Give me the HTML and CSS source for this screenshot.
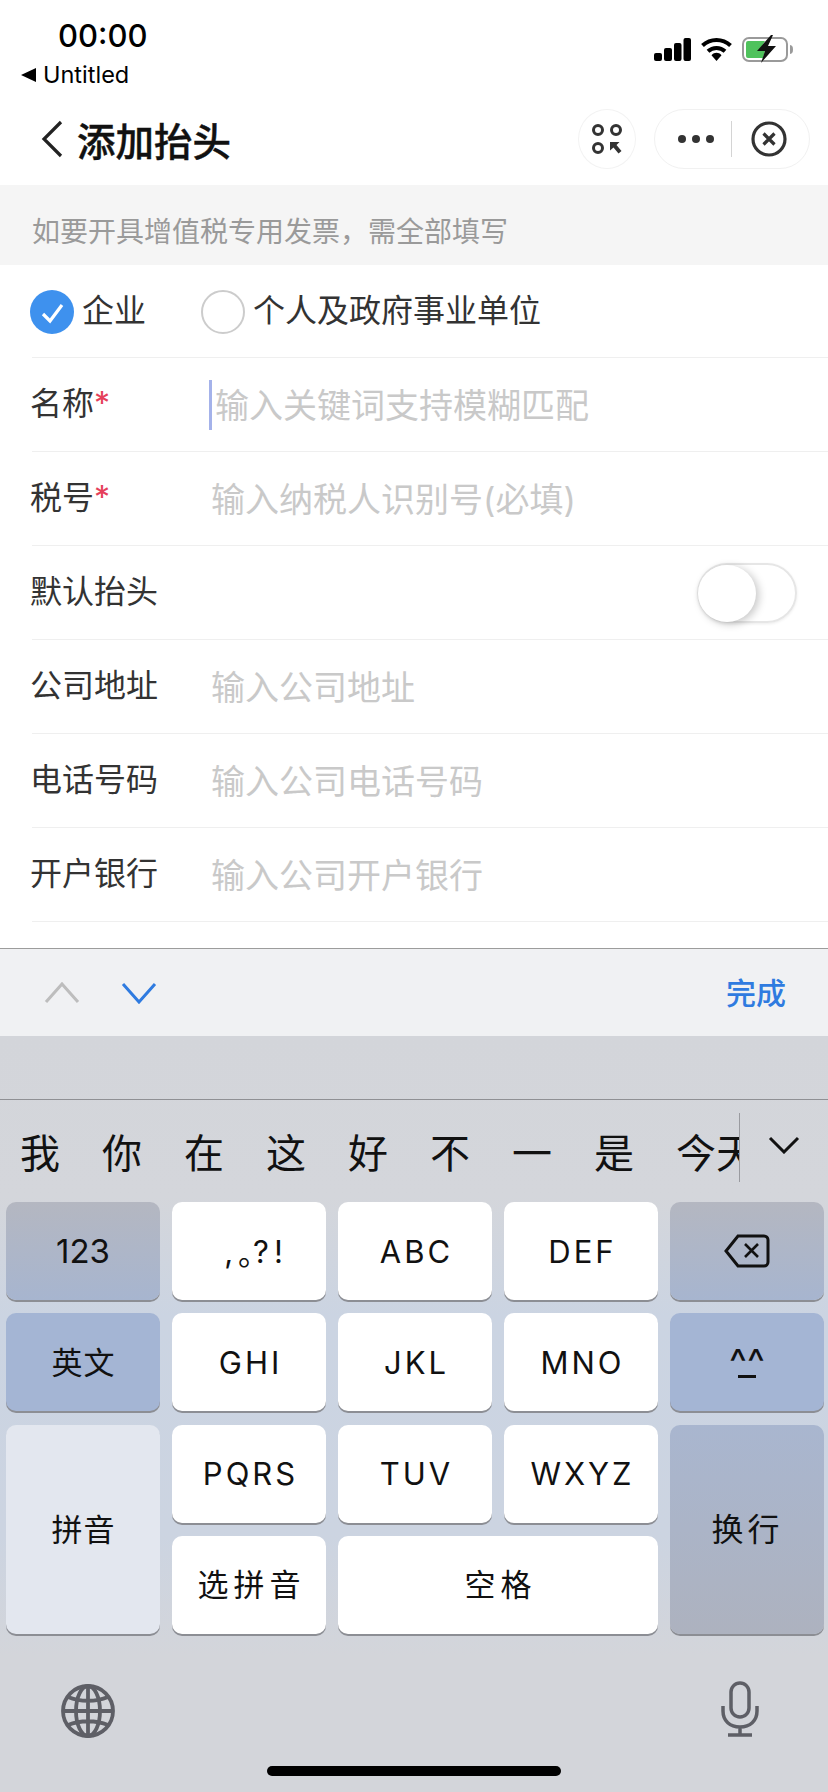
FILE: index.html
```html
<!DOCTYPE html>
<html lang="zh-CN">
<head>
  <meta charset="UTF-8">
  <meta name="viewport" content="width=device-width, initial-scale=1.0">
  <title>添加抬头</title>
  <link rel="stylesheet" href="styles.css">
</head>
<body>
  <div class="page">
    <!-- status bar -->
    <div class="status-bar">
      <div class="status-left">
        <div class="time">00:00</div>
        <div class="from-app"><span class="from-arrow"></span>Untitled</div>
      </div>
      <div class="status-right">
        <svg width="37" height="23" viewBox="0 0 37 23">
          <rect x="0" y="15" width="8" height="8" rx="2"/>
          <rect x="10" y="10" width="8" height="13" rx="2"/>
          <rect x="20" y="5" width="7.5" height="18" rx="2"/>
          <rect x="29.5" y="0" width="7.5" height="23" rx="2"/>
        </svg>
        <svg width="31" height="24" viewBox="0 0 31 24">
          <path d="M1.5 8.5C9.5 1 21.5 1 29.5 8.5" fill="none" stroke="#000" stroke-width="4"/>
          <path d="M7 14.2C11.8 9.8 19.2 9.8 24 14.2" fill="none" stroke="#000" stroke-width="4"/>
          <path d="M10.5 18.2C13.5 15 17.5 15 20.5 18.2L15.5 24Z"/>
        </svg>
        <svg width="54" height="28" viewBox="0 0 54 28">
          <rect x="1" y="3" width="44" height="23" rx="6" fill="none" stroke="#9a9a9a" stroke-width="2"/>
          <path d="M4 8a2 2 0 0 1 2-2h17l-6 10h6l-2 7H6a2 2 0 0 1-2-2Z" fill="#4fc25c"/>
          <path d="M29 0L15 16h8l-4 12 15-17h-8l5-11Z" fill="#111"/>
          <path d="M48 10c2.500.500 3 2 3 4.500s-.500 4-3 4.500Z" fill="#9a9a9a"/>
        </svg>
      </div>
    </div>

    <!-- navigation -->
    <div class="nav-bar">
      <svg class="back-icon" width="24" height="38" viewBox="0 0 24 38">
        <path d="M21 2L4 19l17 17" fill="none" stroke="#222" stroke-width="3.200"/>
      </svg>
      <div class="nav-title">添加抬头</div>
      <div class="round-btn">
        <svg width="30" height="30" viewBox="0 0 30 30">
          <circle cx="6" cy="6" r="4.500" fill="none" stroke="#333" stroke-width="3"/>
          <circle cx="24" cy="6" r="4.500" fill="none" stroke="#333" stroke-width="3"/>
          <circle cx="6" cy="24" r="4.500" fill="none" stroke="#333" stroke-width="3"/>
          <path d="M18 18h9.500l-3 3 5 6-3 2.500-5-6-3.500 3Z" fill="#333"/>
        </svg>
      </div>
      <div class="capsule">
        <div class="capsule-dots"><i></i><i></i><i></i></div>
        <div class="capsule-line"></div>
        <svg width="36" height="36" viewBox="0 0 36 36">
          <circle cx="18" cy="18" r="16" fill="none" stroke="#333" stroke-width="3.200"/>
          <path d="M12.500 12.500l11 11M23.500 12.500l-11 11" fill="none" stroke="#333" stroke-width="3.200"/>
        </svg>
      </div>
    </div>

    <div class="notice">如要开具增值税专用发票，需全部填写</div>

    <!-- invoice form -->
    <div class="form">
      <div class="radio-row">
        <div class="radio radio-on">
          <svg width="44" height="44" viewBox="0 0 44 44">
            <path d="M13 24l7 7 12-16" fill="none" stroke="#fff" stroke-width="3.200"/>
          </svg>
        </div>
        <span class="radio-text radio-text-first">企业</span>
        <div class="radio"></div>
        <span class="radio-text">个人及政府事业单位</span>
      </div>
      <div class="row">
        <div class="label">名称<span class="req">*</span></div>
        <div class="caret"></div>
        <div class="hint hint-active">输入关键词支持模糊匹配</div>
      </div>
      <div class="row">
        <div class="label">税号<span class="req">*</span></div>
        <div class="hint">输入纳税人识别号(必填)</div>
      </div>
      <div class="row">
        <div class="label">默认抬头</div>
        <div class="switch"><div class="switch-knob"></div></div>
      </div>
      <div class="row">
        <div class="label">公司地址</div>
        <div class="hint">输入公司地址</div>
      </div>
      <div class="row">
        <div class="label">电话号码</div>
        <div class="hint">输入公司电话号码</div>
      </div>
      <div class="row row-last">
        <div class="label">开户银行</div>
        <div class="hint">输入公司开户银行</div>
      </div>
    </div>

    <!-- field switcher above the keyboard -->
    <div class="toolbar">
      <svg class="tool-arrow" width="36" height="22" viewBox="0 0 36 22">
        <path d="M2 20L18 2l16 18" fill="none" stroke="#bdbdbd" stroke-width="3"/>
      </svg>
      <svg class="tool-arrow" width="36" height="22" viewBox="0 0 36 22">
        <path d="M2 2l16 18L34 2" fill="none" stroke="#2f7be0" stroke-width="3"/>
      </svg>
      <div class="tool-done">完成</div>
    </div>

    <!-- keyboard -->
    <div class="keyboard">
      <div class="kb-gap"></div>
      <div class="candidates">
        <div class="cand-list">
          <span>我</span><span>你</span><span>在</span><span>这</span><span>好</span><span>不</span><span>一</span><span>是</span><span>今天</span>
        </div>
        <svg class="cand-more" width="32" height="18" viewBox="0 0 32 18">
          <path d="M2 2l14 14L30 2" fill="none" stroke="#111" stroke-width="3"/>
        </svg>
      </div>
      <div class="keys">
        <div class="key key-dark">123</div>
        <div class="key key-light key-punct">,<span class="key-dot">。</span>?!</div>
        <div class="key key-light">ABC</div>
        <div class="key key-light">DEF</div>
        <div class="key key-dark">
          <svg width="46" height="34" viewBox="0 0 46 34">
            <path d="M14 2h26a4 4 0 0 1 4 4v22a4 4 0 0 1-4 4H14L2 17Z" fill="none" stroke="#111" stroke-width="3"/>
            <path d="M21 10l13 13M34 10L21 23" fill="none" stroke="#111" stroke-width="2.600"/>
          </svg>
        </div>
        <div class="key key-blue key-cjk">英文</div>
        <div class="key key-light">GHI</div>
        <div class="key key-light">JKL</div>
        <div class="key key-light">MNO</div>
        <div class="key key-blue"><span class="face">^^</span></div>
        <div class="key key-pale key-cjk key-tall">拼音</div>
        <div class="key key-light">PQRS</div>
        <div class="key key-light">TUV</div>
        <div class="key key-light">WXYZ</div>
        <div class="key key-return key-cjk key-tall key-return-text">换行</div>
        <div class="key key-light key-cjk key-spaced">选拼音</div>
        <div class="key key-light key-cjk key-spaced key-wide">空格</div>
      </div>
      <div class="kb-bottom">
        <svg class="globe" width="54" height="54" viewBox="0 0 54 54">
          <g fill="none" stroke="#5e5f66" stroke-width="3.800">
            <circle cx="27" cy="27" r="25"/>
            <ellipse cx="27" cy="27" rx="12" ry="25"/>
            <path d="M27 2v50M2 27h50M7 13c12 5 28 5 40 0M7 41c12-5 28-5 40 0"/>
          </g>
        </svg>
        <svg width="38" height="56" viewBox="0 0 38 56">
          <g fill="none" stroke="#5e5f66" stroke-width="3.500">
            <rect x="10" y="2" width="18" height="34" rx="9"/>
            <path d="M2 25v5c0 10 7 16 17 16s17-6 17-16v-5M19 46v8M7 54h24"/>
          </g>
        </svg>
      </div>
      <div class="home-bar"></div>
    </div>
  </div>
</body>
</html>
```

FILE: styles.css
```css
* {
  box-sizing: border-box;
}
body {
  margin: 0;
  background: #fff;
  font-family: "Inter", "Noto Sans CJK SC", sans-serif;
}
.page {
  width: 828px;
  height: 1792px;
  overflow: hidden;
  display: flex;
  flex-direction: column;
}

/* status bar */
.status-bar {
  height: 100px;
  display: flex;
  justify-content: space-between;
  color: #000;
}
.status-left {
  padding: 17px 0 0 21px;
}
.time {
  margin-left: 37px;
  font-size: 31px;
  line-height: 38px;
  font-weight: 500;
}
.from-app {
  display: flex;
  align-items: center;
  margin-top: 5px;
  font-size: 23.500px;
  line-height: 30px;
}
.from-arrow {
  width: 0;
  height: 0;
  margin-right: 7px;
  border-style: solid;
  border-width: 7px 15px 7px 0;
  border-color: transparent #000 transparent transparent;
}
.status-right {
  display: flex;
  align-items: center;
  gap: 10px;
  height: 28px;
  margin: 35px 32px 0 0;
}

/* nav bar */
.nav-bar {
  height: 85px;
  display: flex;
  align-items: center;
  padding: 0 18px 0 40px;
}
.back-icon {
  margin-top: -8px;
}
.nav-title {
  margin: -8px auto 0 13px;
  font-size: 38.500px;
  font-weight: 500;
  -webkit-text-stroke: 0.4px #111;
  color: #111;
}
.round-btn {
  width: 58px;
  height: 60px;
  margin: -7px 18px 0 0;
  display: flex;
  align-items: center;
  justify-content: center;
  border: 1px solid #f3f3f3;
  border-radius: 50%;
}
.capsule {
  width: 156px;
  height: 60px;
  margin-top: -7px;
  display: flex;
  align-items: center;
  padding-left: 23px;
  border: 1px solid #f1f1f1;
  border-radius: 30px;
}
.capsule-dots {
  display: flex;
  gap: 6px;
}
.capsule-dots i {
  width: 8px;
  height: 8px;
  background: #333;
  border-radius: 50%;
}
.capsule-line {
  width: 1px;
  height: 36px;
  margin: 0 19px 0 17px;
  background: #d4d4d4;
}

.notice {
  height: 80px;
  padding: 27px 0 0 32px;
  background: #f5f5f5;
  color: #9a9a9a;
  font-size: 28px;
  line-height: 40px;
}

/* form rows */
.form {
  height: 683px;
  color: #333;
}
.radio-row {
  height: 92px;
  display: flex;
  align-items: center;
  padding-left: 30px;
  font-size: 32px;
}
.radio {
  width: 44px;
  height: 44px;
  border: 2px solid #ccc;
  border-radius: 50%;
  margin-top: 1px;
}
.radio-on {
  border: none;
  background: #3e91ee;
}
.radio-text {
  margin: 0 0 6px 8px;
  color: #333;
}
.radio-text-first {
  margin-right: 55px;
}
.row {
  height: 94px;
  margin-left: 32px;
  border-top: 1px solid #efefef;
  display: flex;
  align-items: center;
  font-size: 32px;
  position: relative;
}
.row-last {
  border-bottom: 1px solid #efefef;
  height: 95px;
}
.label {
  width: 181px;
  flex: none;
  margin: 0 0 1px -2px;
  line-height: 44px;
}
.req {
  color: #e5405a;
}
.hint {
  margin-bottom: 3px;
  color: #c9c9c9;
  font-size: 34px;
}
.hint-active {
  margin-left: 4px;
}
.caret {
  position: absolute;
  left: 177px;
  top: 22px;
  width: 3px;
  height: 50px;
  background: #a4b2ea;
}
.switch {
  width: 100px;
  height: 60px;
  margin: 0 31px 0 auto;
  border-radius: 30px;
  border: 2px solid #e6e6e6;
  box-shadow: 0 1px 3px rgba(0, 0, 0, 0.08);
}
.switch-knob {
  width: 58px;
  height: 57px;
  margin-left: -1px;
  background: #fff;
  border-radius: 50%;
  box-shadow: 3px 2px 8px rgba(0, 0, 0, 0.22);
}

/* toolbar */
.toolbar {
  height: 88px;
  flex: none;
  display: flex;
  align-items: center;
  padding: 0 42px 0 44px;
  background: #f0f1f3;
  border-top: 1px solid #9c9c9c;
}
.tool-arrow + .tool-arrow {
  margin-left: 41px;
}
.tool-done {
  margin: 0 0 4px auto;
  color: #2f7be0;
  font-size: 30px;
  font-weight: 500;
}

/* keyboard */
.keyboard {
  flex: 1;
  background: linear-gradient(#d3d5da 0, #d4d6db 160px, #cbd4e2 280px, #ccd4e1 500px, #d3d5da 620px);
}
.kb-gap {
  height: 63px;
}
.candidates {
  height: 103px;
  border-top: 1px solid #8f9094;
  display: flex;
  padding-top: 13px;
}
.cand-list {
  width: 740px;
  height: 69px;
  flex: none;
  overflow: hidden;
  white-space: nowrap;
  display: flex;
  align-items: center;
  gap: 42px;
  padding: 6px 0 0 20px;
  border-right: 1px solid #9a9ba0;
  font-size: 40px;
  color: #111;
}
.cand-more {
  margin: 23px 0 0 28px;
}
.keys {
  display: grid;
  grid-template-columns: repeat(5, 154px);
  grid-auto-rows: 98px;
  column-gap: 12px;
  row-gap: 13.300px;
  padding-left: 6px;
}
.key {
  display: flex;
  align-items: center;
  justify-content: center;
  padding-left: 3px;
  border-radius: 10px;
  color: #111;
  font-size: 31px;
  letter-spacing: 3px;
  box-shadow: 0 2px 0 #8c8e94;
}
.key-light {
  background: #fff;
}
.key-dark {
  padding-left: 0;
  background: linear-gradient(#b4b7c1, #a7b5cf);
  letter-spacing: 0;
  font-size: 33px;
}
.key-blue {
  padding-left: 0;
  background: #a4b5d4;
}
.key-pale {
  background: #e3e7ef;
}
.key-return {
  background: linear-gradient(#a9b6cf, #adb2bf);
}
.key-cjk {
  padding-left: 1px;
  padding-bottom: 4px;
  font-size: 31px;
  letter-spacing: 1px;
}
.key-return-text {
  letter-spacing: 4px;
  font-size: 32px;
}
.key-spaced {
  padding-left: 5px;
  letter-spacing: 5px;
}
.key-tall {
  grid-row: span 2;
}
.key-wide {
  grid-column: span 2;
}
.key-punct {
  padding-left: 14px;
  letter-spacing: 5px;
}
.key-dot {
  letter-spacing: -16px;
}
.face {
  position: relative;
  font-size: 38px;
  letter-spacing: 0;
  line-height: 38px;
}
.face::after {
  content: "";
  position: absolute;
  left: 9px;
  right: 9px;
  bottom: 3px;
  height: 3px;
  background: #111;
}
.kb-bottom {
  display: flex;
  justify-content: space-between;
  align-items: center;
  height: 56px;
  margin-top: 47px;
  padding: 0 69px 0 61px;
}
.globe {
  margin-top: 4px;
}
.home-bar {
  width: 294px;
  height: 10px;
  margin: 29px auto 0;
  background: #000;
  border-radius: 5px;
}
```
